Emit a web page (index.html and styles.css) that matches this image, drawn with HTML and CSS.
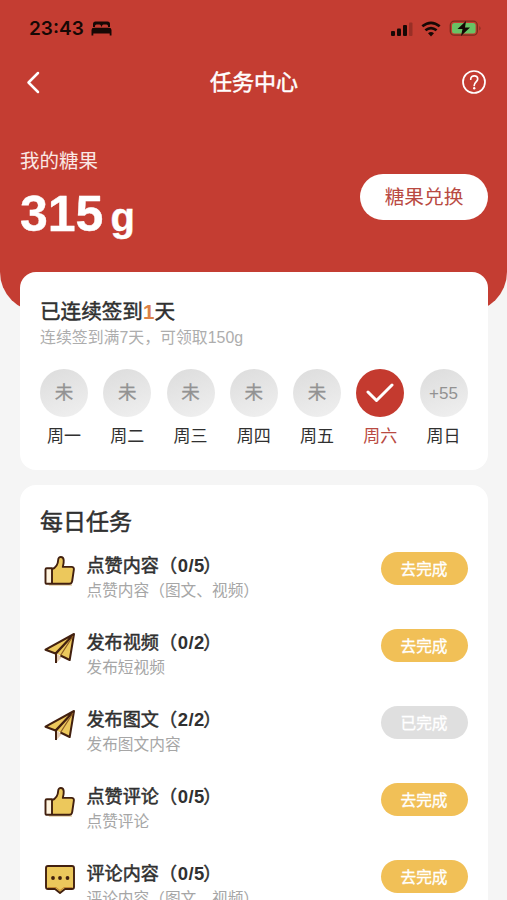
FILE: index.html
```html
<!DOCTYPE html>
<html lang="zh-CN">
<head>
<meta charset="utf-8">
<meta name="viewport" content="width=device-width">
<title>任务中心</title>
<link rel="stylesheet" href="styles.css">
</head>
<body>
<svg class="defs" aria-hidden="true">
  <symbol id="thumb" viewBox="0 0 32 34">
    <path d="M4 29h24v3H5z" fill="#ead9ba"/>
    <path d="M2 14.200h6v15.600H2z" fill="#fff4df"/>
    <path d="M8 15.200c4.600-1.600 6-5.200 6.200-9.400.1-3.800 5.100-3.800 5.500.4.200 2.300-.3 4.700-.9 6.700h8.800c1.700 0 2.500 1 2.300 2.500L28.200 27c-.2 1.800-1.200 2.800-3 2.800H8z" fill="#ecc85c"/>
    <path d="M8 15.200c4.600-1.600 6-5.200 6.200-9.400.1-3.800 5.100-3.800 5.500.4.200 2.300-.3 4.700-.9 6.700h8.800c1.700 0 2.500 1 2.300 2.500L28.200 27c-.2 1.800-1.200 2.800-3 2.800H2.800c-.8 0-1.300-.4-1.300-1.200V15.400c0-.8.5-1.200 1.300-1.200H8v15.600" fill="none" stroke="#42200f" stroke-width="1.900" stroke-linejoin="round"/>
  </symbol>
  <symbol id="plane" viewBox="0 0 32 34">
    <path d="M12 22v10.500l5.500-6z" fill="#e5cdb5"/>
    <path d="M30 3 1.500 18.700l9.800 3.200 14.400 7.100z" fill="#ecc85c"/>
    <path d="M30 3 1.500 18.700l10 3.800L30 3l-4.300 26-9.200-4.500M30 3 12 22.500V32" fill="none" stroke="#42200f" stroke-width="2" stroke-linejoin="round"/>
    <path d="M29 5 16.500 24.500" fill="none" stroke="#8a5a24" stroke-width="1.200"/>
  </symbol>
  <symbol id="bubble" viewBox="0 0 32 34">
    <path d="M4 4h24q2 0 2 2v19q0 2-2 2h-7l-5 4-5-4H4q-2 0-2-2V6q0-2 2-2z" fill="#ecc85c" stroke="#42200f" stroke-width="1.900" stroke-linejoin="round"/>
    <path d="M4 25.500h8l4 3 4-3h8" fill="none" stroke="#c48932" stroke-width="1"/>
    <g fill="#42200f"><circle cx="9" cy="16" r="1.900"/><circle cx="16" cy="16" r="1.900"/><circle cx="23.500" cy="16" r="1.900"/></g>
  </symbol>
</svg>

<header class="hero">
  <div class="status">
    <span class="clock">23:43</span>
    <svg class="bed" width="21" height="15" viewBox="0 0 21 15"><path d="M2 6V3Q2 .5 4.500.500h12Q19 .5 19 3v3h-2V5q0-1.500-1.500-1.500h-3Q11 3.500 11 5v.5h-1V5q0-1.500-1.500-1.500h-3Q4 3.500 4 5v1zM.5 14.500V9Q.5 6.700 3 6.700h15q2.500 0 2.500 2.300v5.500h-1.800v-2H2.300v2z"/></svg>
    <svg class="signals" width="92" height="20" viewBox="0 0 92 20">
      <rect x="1" y="12" width="4" height="5" rx="1"/><rect x="7" y="9.500" width="4" height="7.500" rx="1"/><rect x="13" y="6" width="4" height="11" rx="1"/><rect x="19" y="3.500" width="3.500" height="13.500" rx="1" opacity=".25"/>
      <g fill="none" stroke="#160805" stroke-width="2.700"><path d="M32.300 7.300q8.700-7 17.400 0M35.400 11.300q5.600-4.500 11.200 0"/></g><path d="M38 14.200q3-2.300 6 0l-3 3.200z"/>
      <rect x="60.300" y="2.200" width="27" height="14" rx="4" fill="none" stroke="#7b2b1c" stroke-width="1.300"/><rect x="62" y="4" width="23.600" height="10.500" rx="2.500" fill="#69c264"/><path d="M89.500 7v4.500q2-2.200 0-4.500z" fill="#7b2b1c"/><path d="m76 2-8.500 8h5L71 17l9-8.500h-5z"/>
    </svg>
  </div>
  <nav class="nav">
    <svg width="14" height="24" viewBox="0 0 14 24"><path d="M12 3 2.500 12.500 12 22" fill="none" stroke="#fff" stroke-width="2.500" stroke-linecap="round" stroke-linejoin="round"/></svg>
    <h1>任务中心</h1>
    <svg width="26" height="26" viewBox="0 0 26 26" fill="none" stroke="#fff" stroke-width="1.700"><circle cx="13" cy="13" r="11"/><path d="M9.700 10.200c0-4.600 7-4.300 7-.2 0 2.700-3.500 3-3.500 6.400" stroke-linecap="round"/><circle cx="13.200" cy="19.200" r="1.200" fill="#fff" stroke="none"/></svg>
  </nav>
  <div class="balance">
    <div>
      <div class="label">我的糖果</div>
      <div class="amount">315<span>g</span></div>
    </div>
    <button class="exchange">糖果兑换</button>
  </div>
</header>

<main>
  <section class="card signin">
    <h2>已连续签到<b>1</b>天</h2>
    <p>连续签到满7天，可领取150g</p>
    <ul class="week">
      <li><i>未</i>周一</li>
      <li><i>未</i>周二</li>
      <li><i>未</i>周三</li>
      <li><i>未</i>周四</li>
      <li><i>未</i>周五</li>
      <li class="done"><i><svg width="28" height="22" viewBox="0 0 28 22"><path d="m2 10 8.500 8.500L26 3" fill="none" stroke="#fff" stroke-width="3" stroke-linecap="round" stroke-linejoin="round"/></svg></i>周六</li>
      <li><i class="bonus">+55</i>周日</li>
    </ul>
  </section>

  <section class="card tasks">
    <h2>每日任务</h2>
    <article><svg class="icon"><use href="#thumb"/></svg><div class="info"><h3>点赞内容（<b>0/5</b>）</h3><p>点赞内容（图文、视频）</p></div><button>去完成</button></article>
    <article><svg class="icon"><use href="#plane"/></svg><div class="info"><h3>发布视频（<b>0/2</b>）</h3><p>发布短视频</p></div><button>去完成</button></article>
    <article><svg class="icon"><use href="#plane"/></svg><div class="info"><h3>发布图文（<b>2/2</b>）</h3><p>发布图文内容</p></div><button class="finished">已完成</button></article>
    <article><svg class="icon"><use href="#thumb"/></svg><div class="info"><h3>点赞评论（<b>0/5</b>）</h3><p>点赞评论</p></div><button>去完成</button></article>
    <article><svg class="icon"><use href="#bubble"/></svg><div class="info"><h3>评论内容（<b>0/5</b>）</h3><p>评论内容（图文、视频）</p></div><button>去完成</button></article>
  </section>
</main>
</body>
</html>
```
FILE: styles.css
```css
* { box-sizing: border-box; margin: 0; padding: 0; }
body {
  height: 900px;
  overflow: hidden;
  background: #f5f5f5;
  color: #303030;
  font-family: "Liberation Sans", "Noto Sans CJK SC", sans-serif;
}
.defs { display: none; }
button { border: 0; font-family: inherit; }
svg { display: block; flex: none; }

.hero {
  height: 312px;
  background: #c43d32;
  border-radius: 0 0 40px 40px;
  color: #fff;
}
.status {
  display: flex;
  align-items: center;
  height: 56px;
  padding: 1px 25px 0 29px;
  fill: #160805;
}
.clock {
  color: #160805;
  font: 600 19px/24px Inter, sans-serif;
}
.bed { margin-left: 7px; }
.signals { margin-left: auto; }

.nav {
  display: flex;
  align-items: center;
  justify-content: space-between;
  height: 52px;
  padding: 0 20px 0 26px;
}
.nav h1 {
  font-size: 22px;
  line-height: 30px;
  font-weight: 400;
  -webkit-text-stroke: .5px;
  margin: 1px 0 0 7px;
}
.balance {
  display: flex;
  justify-content: space-between;
  align-items: flex-start;
  padding: 38px 19px 0 20px;
}
.label { font-size: 19.500px; line-height: 28px; color: #fae8e5; padding-top: 1px; }
.amount { font-size: 50px; line-height: 60px; font-weight: 700; margin-top: 9px; -webkit-text-stroke: .4px; }
.amount span { font-size: 40px; margin-left: 7px; }
.exchange {
  width: 128px;
  height: 46px;
  margin-top: 28px;
  padding-bottom: 3px;
  border-radius: 23px;
  background: #fff;
  color: #b94a42;
  font-size: 19.700px;
}

main { margin-top: -40px; padding: 0 19.500px 0 20px; }
.card { background: #fff; border-radius: 16px; padding: 0 20px; }
.signin { height: 198px; padding-top: 26px; }
.card h2 { font-weight: 400; -webkit-text-stroke: .5px; }
.signin h2 { font-size: 20.600px; line-height: 28px; }
.signin h2 b { color: #db8148; -webkit-text-stroke: 0; }
.signin p { font-size: 15.900px; line-height: 24px; color: #adadad; }
.week {
  display: flex;
  justify-content: space-between;
  list-style: none;
  margin-top: 18.500px;
}
.week li {
  display: flex;
  flex-direction: column;
  align-items: center;
  width: 48px;
  font-size: 17px;
  line-height: 24px;
}
.week i {
  display: flex;
  align-items: center;
  justify-content: center;
  width: 48px;
  height: 48px;
  margin-bottom: 8.500px;
  padding-top: 1px;
  border-radius: 50%;
  background: linear-gradient(160deg, #dcdcdc, #f0f0f0);
  color: #929292;
  font-size: 18.500px;
  font-style: normal;
  -webkit-text-stroke: .3px;
}
.week .bonus { font-size: 17px; padding-top: 3px; -webkit-text-stroke: 0; }
.week .done { color: #b94a42; }
.done i { background: #c43a2f; }

.tasks { height: 460px; margin-top: 15px; padding-top: 21px; }
.tasks h2 { font-size: 23px; line-height: 32px; }
article { display: flex; align-items: flex-start; height: 77px; padding-top: 14px; }
article .icon { width: 32px; height: 34px; margin: 2px 0 0 4px; }
.info { flex: 1; margin: 1px 0 0 10.500px; }
.info h3 { font-size: 18.100px; line-height: 26px; font-weight: 400; -webkit-text-stroke: .5px; }
.info h3 b { font-size: 18.500px; letter-spacing: .4px; margin: 0 -1.500px 0 .8px; -webkit-text-stroke: 0; }
.info p { font-size: 15.700px; line-height: 24px; color: #a6a6a6; }
article button {
  width: 87px;
  height: 33px;
  padding-bottom: 1px;
  border-radius: 17px;
  background: #f1c057;
  color: #fff;
  font-size: 15.700px;
  -webkit-text-stroke: .3px;
}
article .finished { background: #dfdfdf; }
```
